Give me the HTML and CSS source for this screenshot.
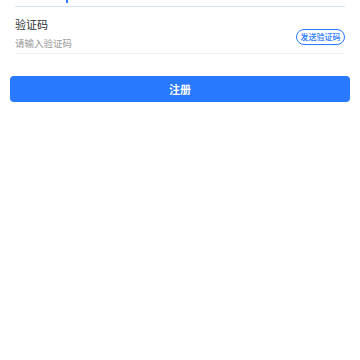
FILE: index.html
```html
<!DOCTYPE html>
<html lang="zh">
<head>
<meta charset="utf-8">
<link rel="stylesheet" href="styles.css">
</head>
<body>
<div class="page">
  <div class="field-prev">
    <span class="caret"></span>
  </div>
  <div class="field">
    <div class="label">验证码</div>
    <div class="row">
      <div class="placeholder">请输入验证码</div>
      <button class="send">发送验证码</button>
    </div>
  </div>
  <button class="submit">注册</button>
</div>
</body>
</html>
```
FILE: styles.css
```css
html, body {
  margin: 0;
  padding: 0;
  background: #fff;
  font-family: "Noto Sans CJK SC", "Noto Sans", sans-serif;
}
.page {
  display: flex;
  flex-direction: column;
}
.field-prev {
  margin: 0 15px;
  height: 6px;
  border-bottom: 1px solid #d3e3fd;
  display: flex;
  align-items: flex-start;
}
.caret {
  margin-left: 51px;
  width: 1.5px;
  height: 3px;
  background: #2979ff;
}
.field {
  margin: 0 15px;
  padding-top: 9px;
  border-bottom: 1px solid #f0f0f0;
}
.label {
  font-size: 11px;
  line-height: 16px;
  color: #303133;
}
.row {
  display: flex;
  justify-content: space-between;
  align-items: flex-start;
  padding-bottom: 3px;
}
.placeholder {
  font-size: 9.5px;
  color: #999;
  line-height: 14px;
  margin-top: 4px;
}
.send {
  margin-top: -3px;
  font-family: inherit;
  font-size: 8px;
  font-weight: 500;
  line-height: 12px;
  color: #2979ff;
  background: #fff;
  border: 1px solid #2979ff;
  border-radius: 9px;
  padding: 1px 3.5px;
  height: 16px;
  box-sizing: border-box;
}
.submit {
  margin: 22px 10px 0;
  height: 26px;
  border: none;
  border-radius: 4px;
  background: #2979ff;
  color: #fff;
  font-family: inherit;
  font-size: 11px;
  font-weight: bold;
}
```
